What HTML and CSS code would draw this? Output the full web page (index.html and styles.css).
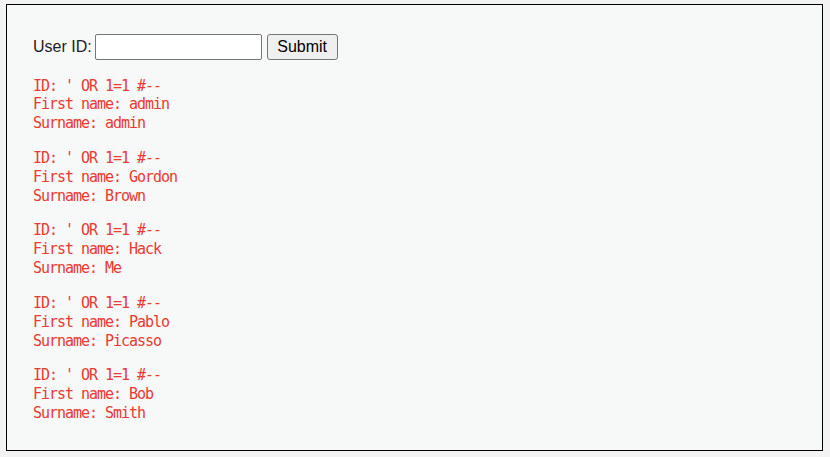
FILE: index.html
```html
<!DOCTYPE html>
<html>
<head>
<meta charset="utf-8">
<link rel="stylesheet" href="styles.css">
</head>
<body>
<div class="vulnerable-area">
  <form class="query-form">
    <label class="query-label" for="uid">User ID:</label>
    <input class="query-input" id="uid" type="text" name="id">
    <button class="query-submit" type="button">Submit</button>
  </form>
  <div class="results">
  <pre class="result">ID: ' OR 1=1 #--
First name: admin
Surname: admin</pre>
  <pre class="result">ID: ' OR 1=1 #--
First name: Gordon
Surname: Brown</pre>
  <pre class="result">ID: ' OR 1=1 #--
First name: Hack
Surname: Me</pre>
  <pre class="result">ID: ' OR 1=1 #--
First name: Pablo
Surname: Picasso</pre>
  <pre class="result">ID: ' OR 1=1 #--
First name: Bob
Surname: Smith</pre>
  </div>
</div>
</body>
</html>
```
FILE: styles.css
```css
html, body {
  margin: 0;
  background: #f3f3f3;
}
body {
  padding: 4px 7px 0 6px;
  font-family: "Liberation Sans", Arial, sans-serif;
  font-size: 16px;
  color: #222;
}
.vulnerable-area {
  border: 1px solid #000;
  background: #f7f8f8;
  padding: 29px 26px 27px 26px;
}
.query-form {
  display: flex;
  align-items: center;
  height: 26px;
  margin: 0;
}
.query-label {
  line-height: 18px;
}
.query-input {
  box-sizing: border-box;
  width: 167px;
  height: 26px;
  margin: 0 0 0 3px;
  padding: 1px 2px;
  border: 1px solid #767676;
  border-radius: 2px;
  background: #fff;
  font: 16px "Liberation Sans", Arial, sans-serif;
}
.query-submit {
  box-sizing: border-box;
  width: 71px;
  height: 26px;
  margin: 0 0 0 5px;
  padding: 0;
  border: 1px solid #767676;
  border-radius: 3px;
  background: #efefef;
  color: #000;
  font: 16px "Liberation Sans", Arial, sans-serif;
}
.results {
  padding-top: 1px;
}
.result {
  margin: 16px 0 0 0;
  font-family: "DejaVu Sans Mono", monospace;
  font-size: 15px;
  letter-spacing: -1.03px;
  line-height: 18.83px;
  color: #ea3a32;
}
.result:first-child {
  margin-top: 15.5px;
}
```
